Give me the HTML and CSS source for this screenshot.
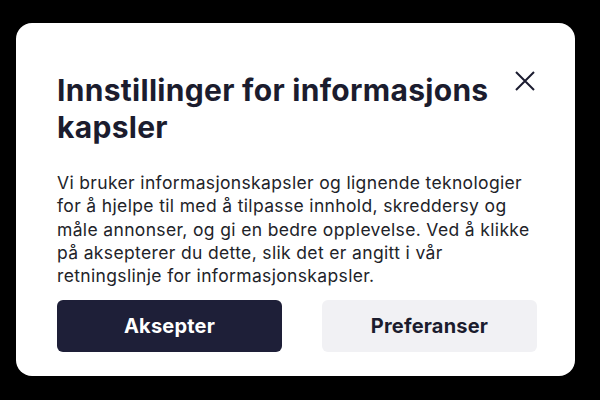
FILE: index.html
```html
<!DOCTYPE html>
<html lang="no">
<head>
<meta charset="utf-8">
<link rel="stylesheet" href="styles.css">
</head>
<body>
<div class="dialog">
  <div class="header">
    <h1 class="title">Innstillinger for informasjons kapsler</h1>
    <button class="close" aria-label="Lukk">
      <svg width="20" height="20" viewBox="0 0 20 20"><path d="M1 1L19 19M19 1L1 19" stroke="#1b1c30" stroke-width="2" fill="none"/></svg>
    </button>
  </div>
  <p class="text">Vi bruker informasjonskapsler og lignende teknologier for å hjelpe til med å tilpasse innhold, skreddersy og måle annonser, og gi en bedre opplevelse. Ved å klikke på aksepterer du dette, slik det er angitt i vår retningslinje for informasjonskapsler.</p>
  <div class="actions">
    <button class="btn btn-primary">Aksepter</button>
    <button class="btn btn-secondary">Preferanser</button>
  </div>
</div>
</body>
</html>
```
FILE: styles.css
```css
html, body {
  margin: 0;
  padding: 0;
  background: #000;
}
body {
  width: 600px;
  height: 400px;
  font-family: Inter, "Noto Sans", sans-serif;
}
.dialog {
  box-sizing: border-box;
  margin: 23px 0 0 16px;
  width: 559px;
  height: 353px;
  background: #fff;
  border-radius: 16px;
  padding: 49px 38px 0 41px;
}
.header {
  display: flex;
  align-items: flex-start;
  justify-content: space-between;
}
.title {
  margin: 0;
  width: 450px;
  font-size: 30px;
  line-height: 37px;
  font-weight: 700;
  color: #1b1c2e;
  letter-spacing: 0.3px;
}
.close {
  margin: -1px 2px 0 0;
  padding: 0;
  border: 0;
  background: none;
  width: 20px;
  height: 20px;
  display: block;
}
.close svg { display: block; }
.text {
  margin: 25px 0 0;
  font-size: 17.5px;
  line-height: 23.3px;
  letter-spacing: 0.35px;
  color: #222329;
}
.actions {
  display: grid;
  grid-template-columns: 225px 215px;
  column-gap: 40px;
  margin-top: 13px;
}
.btn {
  height: 52px;
  border: 0;
  border-radius: 6px;
  font-family: Inter, "Noto Sans", sans-serif;
  font-size: 20px;
  font-weight: 700;
  letter-spacing: 0.2px;
}
.btn-primary {
  background: #1e1f38;
  color: #fff;
}
.btn-secondary {
  background: #f1f1f4;
  color: #1b1c2e;
}
```
